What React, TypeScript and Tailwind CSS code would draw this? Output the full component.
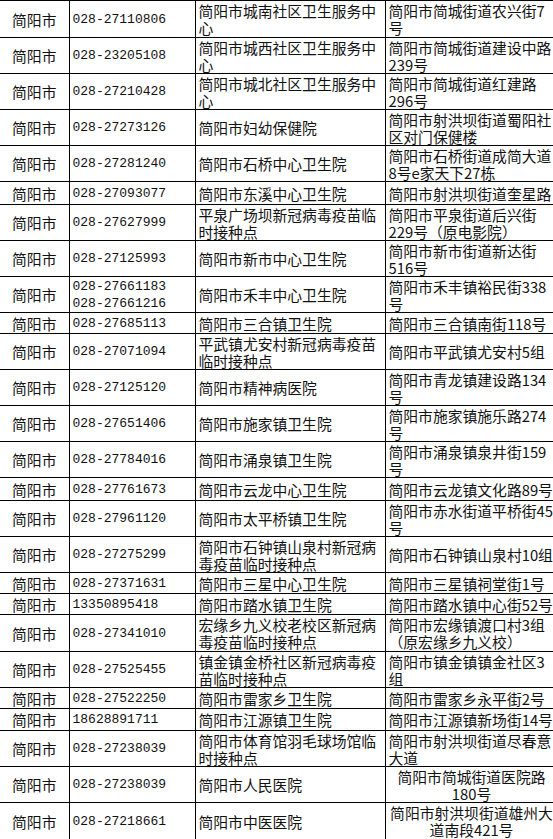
import React from "react";

type Row = {
  h: string;
  phone: string[];
  name: string[];
  addr: string[];
  center?: boolean;
};

const rows: Row[] = [
  { h: "h-[37px]", phone: ["028-27110806"], name: ["简阳市城南社区卫生服务中", "心"], addr: ["简阳市简城街道农兴街7", "号"] },
  { h: "h-[36px]", phone: ["028-23205108"], name: ["简阳市城西社区卫生服务中", "心"], addr: ["简阳市简城街道建设中路", "239号"] },
  { h: "h-[36px]", phone: ["028-27210428"], name: ["简阳市城北社区卫生服务中", "心"], addr: ["简阳市简城街道红建路", "296号"] },
  { h: "h-[36px]", phone: ["028-27273126"], name: ["简阳市妇幼保健院"], addr: ["简阳市射洪坝街道蜀阳社", "区对门保健楼"] },
  { h: "h-[36px]", phone: ["028-27281240"], name: ["简阳市石桥中心卫生院"], addr: ["简阳市石桥街道成简大道", "8号e家天下27栋"] },
  { h: "h-[23px]", phone: ["028-27093077"], name: ["简阳市东溪中心卫生院"], addr: ["简阳市射洪坝街道奎星路"] },
  { h: "h-[36px]", phone: ["028-27627999"], name: ["平泉广场坝新冠病毒疫苗临", "时接种点"], addr: ["简阳市平泉街道后兴街", "229号（原电影院）"] },
  { h: "h-[36px]", phone: ["028-27125993"], name: ["简阳市新市中心卫生院"], addr: ["简阳市新市街道新达街", "516号"] },
  { h: "h-[36px]", phone: ["028-27661183", "028-27661216"], name: ["简阳市禾丰中心卫生院"], addr: ["简阳市禾丰镇裕民街338", "号"] },
  { h: "h-[21px]", phone: ["028-27685113"], name: ["简阳市三合镇卫生院"], addr: ["简阳市三合镇南街118号"] },
  { h: "h-[36px]", phone: ["028-27071094"], name: ["平武镇尤安村新冠病毒疫苗", "临时接种点"], addr: ["简阳市平武镇尤安村5组"] },
  { h: "h-[36px]", phone: ["028-27125120"], name: ["简阳市精神病医院"], addr: ["简阳市青龙镇建设路134", "号"] },
  { h: "h-[36px]", phone: ["028-27651406"], name: ["简阳市施家镇卫生院"], addr: ["简阳市施家镇施乐路274", "号"] },
  { h: "h-[36px]", phone: ["028-27784016"], name: ["简阳市涌泉镇卫生院"], addr: ["简阳市涌泉镇泉井街159", "号"] },
  { h: "h-[23px]", phone: ["028-27761673"], name: ["简阳市云龙中心卫生院"], addr: ["简阳市云龙镇文化路89号"] },
  { h: "h-[36px]", phone: ["028-27961120"], name: ["简阳市太平桥镇卫生院"], addr: ["简阳市赤水街道平桥街45", "号"] },
  { h: "h-[36px]", phone: ["028-27275299"], name: ["简阳市石钟镇山泉村新冠病", "毒疫苗临时接种点"], addr: ["简阳市石钟镇山泉村10组"] },
  { h: "h-[21px]", phone: ["028-27371631"], name: ["简阳市三星中心卫生院"], addr: ["简阳市三星镇祠堂街1号"] },
  { h: "h-[21px]", phone: ["13350895418"], name: ["简阳市踏水镇卫生院"], addr: ["简阳市踏水镇中心街52号"] },
  { h: "h-[37px]", phone: ["028-27341010"], name: ["宏缘乡九义校老校区新冠病", "毒疫苗临时接种点"], addr: ["简阳市宏缘镇渡口村3组", "（原宏缘乡九义校）"] },
  { h: "h-[36px]", phone: ["028-27525455"], name: ["镇金镇金桥社区新冠病毒疫", "苗临时接种点"], addr: ["简阳市镇金镇镇金社区3", "组"] },
  { h: "h-[21px]", phone: ["028-27522250"], name: ["简阳市雷家乡卫生院"], addr: ["简阳市雷家乡永平街2号"] },
  { h: "h-[22px]", phone: ["18628891711"], name: ["简阳市江源镇卫生院"], addr: ["简阳市江源镇新场街14号"] },
  { h: "h-[36px]", phone: ["028-27238039"], name: ["简阳市体育馆羽毛球场馆临", "时接种点"], addr: ["简阳市射洪坝街道尽春意", "大道"] },
  { h: "h-[36px]", phone: ["028-27238039"], name: ["简阳市人民医院"], addr: ["简阳市简城街道医院路", "180号"], center: true },
  { h: "h-[37px]", phone: ["028-27218661"], name: ["简阳市中医医院"], addr: ["简阳市射洪坝街道雄州大", "道南段421号"], center: true },
];

const Lines = ({ lines }: { lines: string[] }) => (
  <>
    {lines.map((l, i) => (
      <div key={i} className="whitespace-nowrap">
        {l}
      </div>
    ))}
  </>
);

export default function App() {
  return (
    <div className="w-[553px] h-[839px] overflow-hidden bg-white text-[#111] font-['Noto_Sans_CJK_SC',sans-serif] text-[14.8px] leading-[17px]">
      <table className="w-[558px] table-fixed border-collapse">
        <colgroup>
          <col className="w-[69px]" />
          <col className="w-[126px]" />
          <col className="w-[190px]" />
          <col className="w-[173px]" />
        </colgroup>
        <tbody>
          {rows.map((r, i) => (
            <tr key={i} className={r.h}>
              <td className="border border-l-0 border-black p-0 text-center align-middle">简阳市</td>
              <td className="border border-black py-0 pl-[3px] pr-0 align-middle font-['Liberation_Mono',monospace] text-[13px]">
                <Lines lines={r.phone} />
              </td>
              <td className="border border-black py-0 pl-[3px] pr-0 align-middle overflow-hidden">
                <Lines lines={r.name} />
              </td>
              <td
                className={
                  r.center
                    ? "border border-black py-0 px-0 align-middle text-center overflow-hidden"
                    : "border border-black py-0 pl-[3px] pr-0 align-middle overflow-hidden"
                }
              >
                <Lines lines={r.addr} />
              </td>
            </tr>
          ))}
        </tbody>
      </table>
    </div>
  );
}
